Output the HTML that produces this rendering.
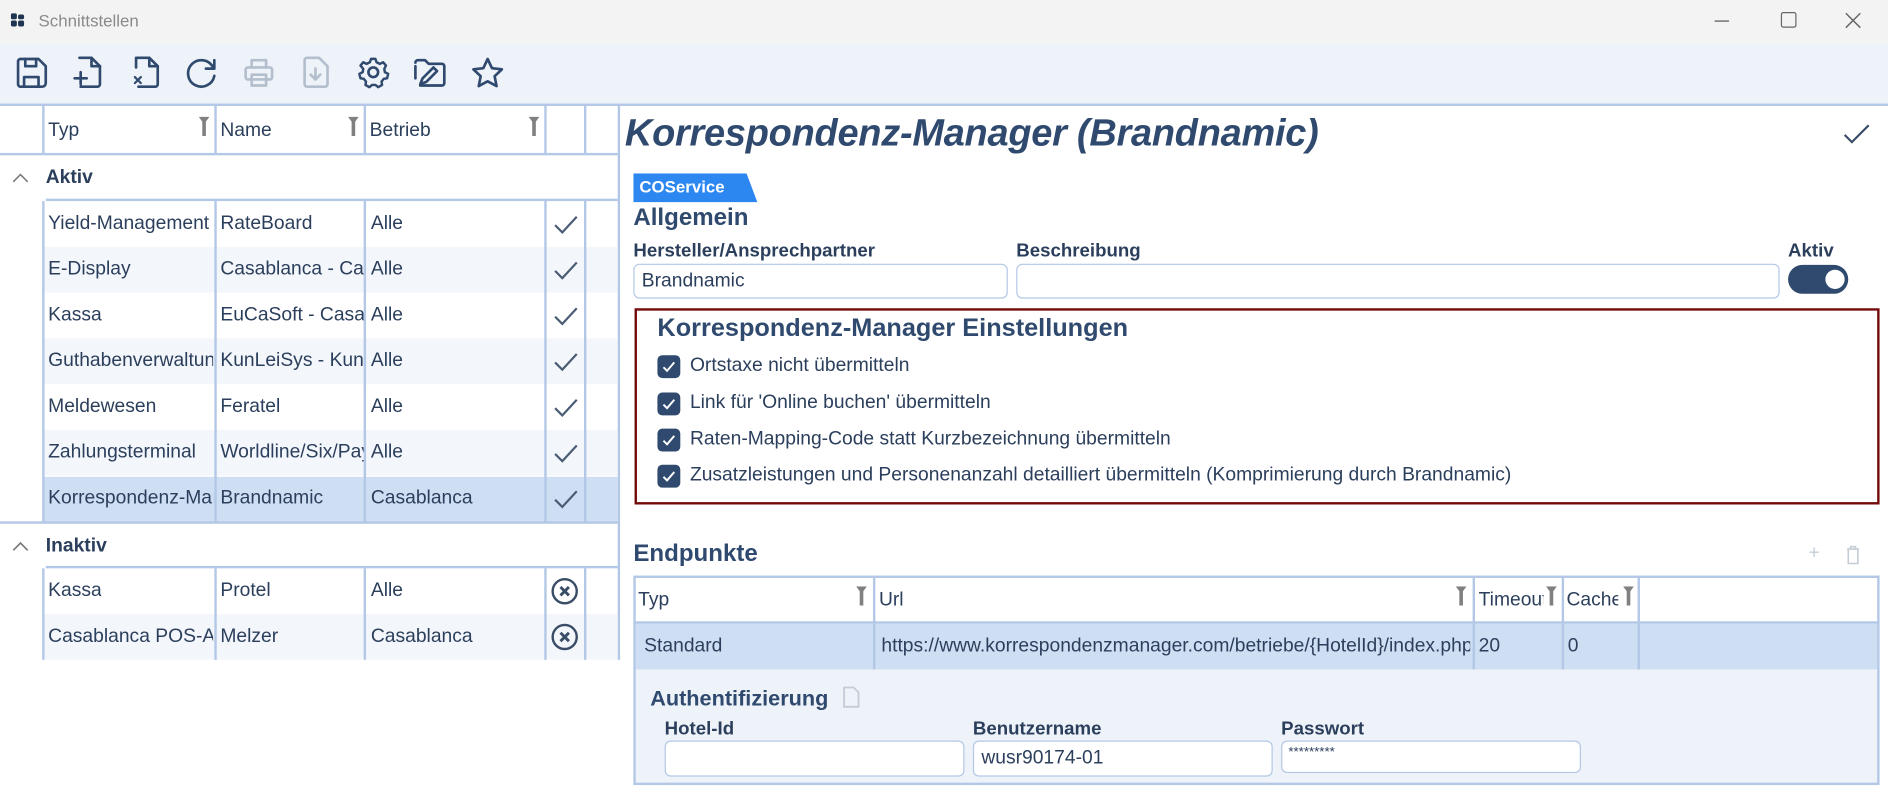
<!DOCTYPE html>
<html><head><meta charset="utf-8">
<style>
*{box-sizing:border-box;margin:0;padding:0}
html,body{width:1888px;height:801px;overflow:hidden;background:#fff}
#s{position:absolute;left:0;top:0;width:1568px;height:666px;transform:scale(1.20408);transform-origin:0 0;font-family:"Liberation Sans",sans-serif;color:#2b3f5c;font-size:16px}
.a{position:absolute}
.vl{position:absolute;width:2px;background:#b3c8e6}
.hl{position:absolute;height:2px;background:#b3c8e6}
.t{position:absolute;white-space:nowrap;overflow:hidden}
.b{font-weight:bold}
.lb{font-size:15.5px;font-weight:bold}
.inp{position:absolute;border:1px solid #b3c8e6;border-radius:5px;background:#fff;height:29px}
.cb{position:absolute;width:19px;height:19px;border-radius:4px;background:#2f4a6e}
.filt{position:absolute;width:9px;height:16px}
</style></head><body><div id="s">
<div class="a" style="left:0;top:0;width:1568px;height:36px;background:#f3f3f3"></div>
<svg class="a" style="left:9px;top:11px" width="12" height="12"><rect x="0" y="0" width="5" height="5" rx="1.5" fill="#1e3450"/><rect x="6" y="1" width="5" height="4" rx="1.5" fill="#1e3450"/><rect x="0" y="6" width="5" height="5" rx="1.5" fill="#1e3450"/><rect x="6" y="6" width="5" height="5" rx="1.5" fill="#1e3450"/></svg>
<div class="t" style="left:32px;top:9px;font-size:14px;color:#8a8a8a">Schnittstellen</div>
<div class="a" style="left:1424px;top:17px;width:12px;height:1px;background:#555"></div>
<div class="a" style="left:1479px;top:10px;width:13px;height:13px;border:1.3px solid #666;border-radius:2px"></div>
<svg class="a" style="left:1532px;top:10px" width="14" height="14"><path d="M1 1L13 13M13 1L1 13" stroke="#666" stroke-width="1.2"/></svg>
<div class="a" style="left:0;top:36px;width:1568px;height:50px;background:#eef2f9"></div>
<svg class="a" style="left:0;top:36px" width="440" height="50" fill="none" stroke="#2f4a6e" stroke-width="2.2" stroke-linecap="round" stroke-linejoin="round">
<g transform="translate(14,12)"><path d="M3 1h15l6 6v14a3 3 0 0 1-3 3H3a2 2 0 0 1-2-2V3a2 2 0 0 1 2-2z"/><path d="M7 1v6h9V1M6 24v-8h12v8"/></g>
<g transform="translate(60,11)"><path d="M6 1h10l7 7v15a2 2 0 0 1-2 2H7"/><path d="M16 1v7h7"/><path d="M2 18h10M7 13v10"/></g>
<g transform="translate(108,11)"><path d="M6 1h10l7 7v15a2 2 0 0 1-2 2H7"/><path d="M16 1v7h7M5 1v8"/><path d="M4 17l5 5M9 17l-5 5" stroke-width="1.8"/></g>
<g transform="translate(155,12)"><path d="M22 8A11 11 0 1 0 23 15"/><path d="M23 2v7h-7"/></g>
<g transform="translate(203,12)" stroke="#b4bfcd"><path d="M6 8V2h12v6"/><rect x="1" y="8" width="22" height="10" rx="2"/><rect x="6" y="14" width="12" height="9"/></g>
<g transform="translate(251,11)" stroke="#b4bfcd"><path d="M4 1h10l7 7v15a2 2 0 0 1-2 2H4a2 2 0 0 1-2-2V3a2 2 0 0 1 2-2z"/><path d="M11 10v9M7 15l4 4 4-4"/></g>
<g transform="translate(298,12)"><circle cx="12" cy="12" r="4"/><path d="M10 1h4l1 3 3 1.5 3-1.5 2.5 3-1.5 3 .5 3 3 1.5-1 4-3 .5-2 2.5.5 3-3.5 2-2.5-2h-3l-2.5 2-3.5-2 .5-3-2-2.5-3-.5-1-4 3-1.5.5-3L.5 7l2.5-3 3 1.5L9 4z" transform="scale(.92) translate(1,0)"/></g>
<g transform="translate(344,13)"><path d="M1 3a2 2 0 0 1 2-2h6l3 3h11a2 2 0 0 1 2 2v14a2 2 0 0 1-2 2H5"/><path d="M1 6v10"/><path d="M5 21l2-5 9-9 3 3-9 9z"/></g>
<g transform="translate(392,12)"><path d="M13 1l3.6 7.6 8.2 1-6 5.7 1.6 8.2L13 19.5 5.6 23.5l1.6-8.2-6-5.7 8.2-1z"/></g>
</svg>
<div class="hl" style="left:0;top:86px;width:1568px"></div>
<div class="vl" style="left:35px;top:88px;height:40px"></div>
<div class="vl" style="left:178px;top:88px;height:40px"></div>
<div class="vl" style="left:302px;top:88px;height:40px"></div>
<div class="vl" style="left:452px;top:88px;height:40px"></div>
<div class="vl" style="left:485px;top:88px;height:40px"></div>
<div class="vl" style="left:513px;top:88px;height:460px"></div>
<div class="t" style="left:40px;top:100px">Typ</div>
<div class="t" style="left:183px;top:100px">Name</div>
<div class="t" style="left:307px;top:100px">Betrieb</div>
<svg class="filt" style="left:165px;top:97px" viewBox="0 0 9 16"><path d="M0 0h9L6 4v12H3V4z" fill="#808080"/></svg>
<svg class="filt" style="left:289px;top:97px" viewBox="0 0 9 16"><path d="M0 0h9L6 4v12H3V4z" fill="#808080"/></svg>
<svg class="filt" style="left:439px;top:97px" viewBox="0 0 9 16"><path d="M0 0h9L6 4v12H3V4z" fill="#808080"/></svg>
<div class="hl" style="left:0;top:127px;width:513px"></div>
<svg class="a" style="left:10px;top:143px" width="14" height="9"><path d="M1 8L7 2l6 6" stroke="#777" fill="none" stroke-width="1.3"/></svg>
<div class="t b" style="left:38px;top:139px">Aktiv</div>
<div class="hl" style="left:38px;top:165px;width:475px"></div>
<div class="a" style="left:36px;top:205px;width:477px;height:38px;background:#f3f6fb"></div>
<div class="a" style="left:36px;top:281px;width:477px;height:38px;background:#f3f6fb"></div>
<div class="a" style="left:36px;top:357px;width:477px;height:38px;background:#f3f6fb"></div>
<div class="a" style="left:36px;top:396px;width:477px;height:38px;background:#cfdff3"></div>
<div class="a" style="left:36px;top:510px;width:477px;height:38px;background:#f3f6fb"></div>
<div class="vl" style="left:35px;top:167px;height:267px"></div>
<div class="vl" style="left:178px;top:167px;height:267px"></div>
<div class="vl" style="left:302px;top:167px;height:267px"></div>
<div class="vl" style="left:452px;top:167px;height:267px"></div>
<div class="vl" style="left:485px;top:167px;height:267px"></div>
<div class="vl" style="left:35px;top:472px;height:76px"></div>
<div class="vl" style="left:178px;top:472px;height:76px"></div>
<div class="vl" style="left:302px;top:472px;height:76px"></div>
<div class="vl" style="left:452px;top:472px;height:76px"></div>
<div class="vl" style="left:485px;top:472px;height:76px"></div>
<div class="t" style="left:40px;top:177px;width:137px">Yield-Management</div><div class="t" style="left:183px;top:177px;width:119px">RateBoard</div><div class="t" style="left:308px;top:177px">Alle</div>
<div class="t" style="left:40px;top:215px;width:137px">E-Display</div><div class="t" style="left:183px;top:215px;width:119px">Casablanca - Casablanca</div><div class="t" style="left:308px;top:215px">Alle</div>
<div class="t" style="left:40px;top:253px;width:137px">Kassa</div><div class="t" style="left:183px;top:253px;width:119px">EuCaSoft - Casablanca</div><div class="t" style="left:308px;top:253px">Alle</div>
<div class="t" style="left:40px;top:291px;width:137px">Guthabenverwaltung</div><div class="t" style="left:183px;top:291px;width:119px">KunLeiSys - KunLeiSys</div><div class="t" style="left:308px;top:291px">Alle</div>
<div class="t" style="left:40px;top:329px;width:137px">Meldewesen</div><div class="t" style="left:183px;top:329px;width:119px">Feratel</div><div class="t" style="left:308px;top:329px">Alle</div>
<div class="t" style="left:40px;top:367px;width:137px">Zahlungsterminal</div><div class="t" style="left:183px;top:367px;width:119px">Worldline/Six/Payone</div><div class="t" style="left:308px;top:367px">Alle</div>
<div class="t" style="left:40px;top:405px;width:137px">Korrespondenz-Manager</div><div class="t" style="left:183px;top:405px;width:119px">Brandnamic</div><div class="t" style="left:308px;top:405px">Casablanca</div>
<svg class="a" style="left:459px;top:177px" width="22" height="250" fill="none" stroke="#4a5d75" stroke-width="1.8">
<path d="M2 10l6 6L20 3"/><path d="M2 48l6 6L20 41"/><path d="M2 86l6 6L20 79"/><path d="M2 124l6 6L20 117"/><path d="M2 162l6 6L20 155"/><path d="M2 200l6 6L20 193"/><path d="M2 238l6 6L20 231"/></svg>
<div class="hl" style="left:0;top:433px;width:513px"></div>
<svg class="a" style="left:10px;top:449px" width="14" height="9"><path d="M1 8L7 2l6 6" stroke="#777" fill="none" stroke-width="1.3"/></svg>
<div class="t b" style="left:38px;top:445px">Inaktiv</div>
<div class="hl" style="left:38px;top:470px;width:475px"></div>
<div class="t" style="left:40px;top:482px">Kassa</div><div class="t" style="left:183px;top:482px">Protel</div><div class="t" style="left:308px;top:482px">Alle</div>
<div class="t" style="left:40px;top:520px;width:137px">Casablanca POS-Anbindung</div><div class="t" style="left:183px;top:520px">Melzer</div><div class="t" style="left:308px;top:520px">Casablanca</div>
<svg class="a" style="left:457px;top:479px" width="26" height="64" fill="none" stroke="#3a4d66" stroke-width="2">
<circle cx="12" cy="12" r="10"/><path d="M8.5 8.5l7 7M15.5 8.5l-7 7" stroke-width="2.4"/>
<circle cx="12" cy="50" r="10"/><path d="M8.5 46.5l7 7M15.5 46.5l-7 7" stroke-width="2.4"/></svg>
<div class="t b" style="left:519px;top:92px;font-size:31.5px;font-style:italic;color:#2f4a6e;letter-spacing:-0.2px">Korrespondenz-Manager (Brandnamic)</div>
<svg class="a" style="left:1531px;top:103px" width="22" height="18"><path d="M1 9l6 6L21 1" fill="none" stroke="#3a4d66" stroke-width="1.8"/></svg>
<svg class="a" style="left:526px;top:144px" width="104" height="24"><path d="M0 0h94l9 24H0z" fill="#2d87f0"/></svg>
<div class="t b" style="left:531px;top:147px;font-size:14px;color:#fff">COService</div>
<div class="t b" style="left:526px;top:170px;font-size:20px;color:#2f4a6e">Allgemein</div>
<div class="t lb" style="left:526px;top:200px">Hersteller/Ansprechpartner</div>
<div class="t lb" style="left:844px;top:200px">Beschreibung</div>
<div class="t lb" style="left:1485px;top:200px">Aktiv</div>
<div class="inp" style="left:526px;top:219px;width:311px"></div>
<div class="t" style="left:533px;top:225px">Brandnamic</div>
<div class="inp" style="left:844px;top:219px;width:634px"></div>
<div class="a" style="left:1485px;top:220px;width:50px;height:24px;border-radius:12px;background:#2f4a6e"></div>
<div class="a" style="left:1516px;top:224px;width:16px;height:16px;border-radius:8px;background:#fff"></div>
<div class="a" style="left:527px;top:256px;width:1034px;height:163px;border:2.5px solid #740a0a"></div>
<div class="t b" style="left:546px;top:261px;font-size:21px;color:#2f4a6e">Korrespondenz-Manager Einstellungen</div>
<div class="cb" style="left:546px;top:295px"></div><div class="cb" style="left:546px;top:326px"></div><div class="cb" style="left:546px;top:356px"></div><div class="cb" style="left:546px;top:386px"></div>
<svg class="a" style="left:546px;top:295px" width="19" height="110" fill="none" stroke="#fff" stroke-width="1.6"><path d="M5 10l3 3 6-7"/><path d="M5 41l3 3 6-7"/><path d="M5 71l3 3 6-7"/><path d="M5 101l3 3 6-7"/></svg>
<div class="t" style="left:573px;top:295px">Ortstaxe nicht übermitteln</div>
<div class="t" style="left:573px;top:326px">Link für 'Online buchen' übermitteln</div>
<div class="t" style="left:573px;top:356px">Raten-Mapping-Code statt Kurzbezeichnung übermitteln</div>
<div class="t" style="left:573px;top:386px">Zusatzleistungen und Personenanzahl detailliert übermitteln (Komprimierung durch Brandnamic)</div>
<div class="t b" style="left:526px;top:449px;font-size:20px;color:#2f4a6e">Endpunkte</div>
<div class="t" style="left:1502px;top:451px;color:#c4ccd6;font-size:16px">+</div>
<svg class="a" style="left:1533px;top:453px" width="12" height="16" fill="none" stroke="#c4ccd6" stroke-width="1.3"><path d="M1 3h10M4 3V1h4v2M2 3v12h8V3"/></svg>
<div class="a" style="left:528px;top:518px;width:1031px;height:38px;background:#cfdff3"></div>
<div class="a" style="left:528px;top:556px;width:1031px;height:94px;background:#eef2f9"></div>
<div class="a" style="left:526px;top:478px;width:1035px;height:174px;border:2px solid #b3c8e6"></div>
<div class="hl" style="left:526px;top:516px;width:1035px"></div>
<div class="vl" style="left:725px;top:480px;height:76px"></div>
<div class="vl" style="left:1223px;top:480px;height:76px"></div>
<div class="vl" style="left:1297px;top:480px;height:76px"></div>
<div class="vl" style="left:1360px;top:480px;height:76px"></div>
<div class="t" style="left:530px;top:490px">Typ</div>
<div class="t" style="left:730px;top:490px">Url</div>
<div class="t" style="left:1228px;top:490px;width:54px">Timeout</div>
<div class="t" style="left:1301px;top:490px;width:43px">Cache</div>
<svg class="filt" style="left:711px;top:487px" viewBox="0 0 9 16"><path d="M0 0h9L6 4v12H3V4z" fill="#808080"/></svg>
<svg class="filt" style="left:1209px;top:487px" viewBox="0 0 9 16"><path d="M0 0h9L6 4v12H3V4z" fill="#808080"/></svg>
<svg class="filt" style="left:1284px;top:487px" viewBox="0 0 9 16"><path d="M0 0h9L6 4v12H3V4z" fill="#808080"/></svg>
<svg class="filt" style="left:1348px;top:487px" viewBox="0 0 9 16"><path d="M0 0h9L6 4v12H3V4z" fill="#808080"/></svg>
<div class="t" style="left:535px;top:528px">Standard</div>
<div class="t" style="left:732px;top:528px;width:489px">https://www.korrespondenzmanager.com/betriebe/{HotelId}/index.php</div>
<div class="t" style="left:1228px;top:528px">20</div>
<div class="t" style="left:1302px;top:528px">0</div>
<div class="t b" style="left:540px;top:570px;font-size:18px;color:#2f4a6e">Authentifizierung</div>
<svg class="a" style="left:700px;top:570px" width="14" height="18" fill="none" stroke="#c4ccd6" stroke-width="1.5"><path d="M1 1h8l4 4v12H1z"/></svg>
<div class="t lb" style="left:552px;top:597px">Hotel-Id</div>
<div class="t lb" style="left:808px;top:597px">Benutzername</div>
<div class="t lb" style="left:1064px;top:597px">Passwort</div>
<div class="inp" style="left:552px;top:615px;width:249px;height:30px"></div>
<div class="inp" style="left:808px;top:615px;width:249px;height:30px"></div>
<div class="t" style="left:815px;top:621px">wusr90174-01</div>
<div class="inp" style="left:1064px;top:615px;width:249px;height:27px"></div>
<div class="t" style="left:1070px;top:619px;font-size:11px">*********</div>
</div></body></html>
